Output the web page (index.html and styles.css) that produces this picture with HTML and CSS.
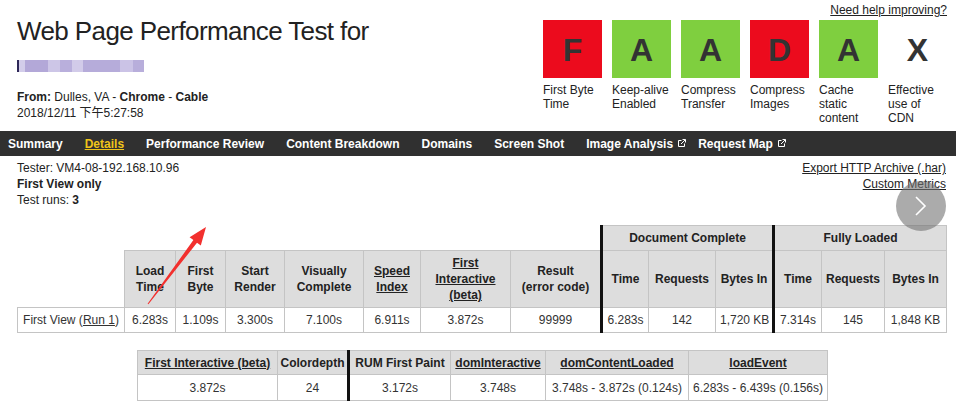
FILE: index.html
```html
<!DOCTYPE html>
<html lang="en">
<head>
<meta charset="utf-8">
<title>Web Page Performance Test</title>
<link rel="stylesheet" href="styles.css">
</head>
<body>
<div class="page">
  <header class="header">
    <div class="title-block">
      <h1 class="title">Web Page Performance Test for</h1>
      <div class="url-blur"><span class="s1"></span><span class="s2"></span><span class="s3"></span><span class="s4"></span><span class="s5"></span><span class="s6"></span><span class="s7"></span><span class="s8"></span></div>
      <div class="test-meta">
        <div><b>From:</b> Dulles, VA - <b>Chrome</b> - <b>Cable</b></div>
        <div>2018/12/11 下午5:27:58</div>
      </div>
    </div>
    <div class="grades-block">
      <a class="help-link" href="#">Need help improving?</a>
      <ul class="grades">
        <li class="grade"><div class="grade-box red">F</div><div class="grade-label">First Byte Time</div></li>
        <li class="grade"><div class="grade-box green">A</div><div class="grade-label">Keep-alive Enabled</div></li>
        <li class="grade"><div class="grade-box green">A</div><div class="grade-label">Compress Transfer</div></li>
        <li class="grade"><div class="grade-box red">D</div><div class="grade-label">Compress Images</div></li>
        <li class="grade"><div class="grade-box green">A</div><div class="grade-label">Cache static content</div></li>
        <li class="grade"><div class="grade-box">X</div><div class="grade-label">Effective use of CDN</div></li>
      </ul>
    </div>
  </header>

  <nav class="nav">
    <a href="#">Summary</a>
    <a href="#" class="active">Details</a>
    <a href="#">Performance Review</a>
    <a href="#">Content Breakdown</a>
    <a href="#">Domains</a>
    <a href="#">Screen Shot</a>
    <a href="#">Image Analysis<svg class="ext" width="8" height="8" viewBox="0 0 8 8"><path d="M3.5 1.5H0.5v6h6V4.5" fill="none" stroke="#fff" stroke-width="1"/><path d="M3 5L7.2 0.8M4.5 0.5h3v3" fill="none" stroke="#fff" stroke-width="1"/></svg></a>
    <a href="#">Request Map<svg class="ext" width="8" height="8" viewBox="0 0 8 8"><path d="M3.5 1.5H0.5v6h6V4.5" fill="none" stroke="#fff" stroke-width="1"/><path d="M3 5L7.2 0.8M4.5 0.5h3v3" fill="none" stroke="#fff" stroke-width="1"/></svg></a>
  </nav>

  <section class="run-info">
    <div class="run-meta">
      <div>Tester: VM4-08-192.168.10.96</div>
      <div><b>First View only</b></div>
      <div>Test runs: <b>3</b></div>
    </div>
    <div class="exports">
      <a href="#">Export HTTP Archive (.har)</a>
      <a href="#">Custom Metrics</a>
    </div>
  </section>

  <table class="results">
    <colgroup>
      <col class="w107"><col class="w51"><col class="w50"><col class="w59"><col class="w79"><col class="w57"><col class="w90"><col class="w91"><col class="w47"><col class="w67"><col class="w58"><col class="w48"><col class="w63"><col class="w62">
    </colgroup>
    <tr class="row-group">
      <td class="blank" colspan="8"></td>
      <th colspan="3" class="sep">Document Complete</th>
      <th colspan="3" class="sep">Fully Loaded</th>
    </tr>
    <tr class="row-head">
      <td class="blank"></td>
      <th>Load<br>Time</th>
      <th>First<br>Byte</th>
      <th>Start<br>Render</th>
      <th>Visually<br>Complete</th>
      <th><a href="#">Speed<br>Index</a></th>
      <th><a href="#">First<br>Interactive<br>(beta)</a></th>
      <th>Result<br>(error code)</th>
      <th class="sep">Time</th>
      <th>Requests</th>
      <th>Bytes In</th>
      <th class="sep">Time</th>
      <th>Requests</th>
      <th>Bytes In</th>
    </tr>
    <tr class="row-data">
      <td>First View (<a href="#">Run 1</a>)</td>
      <td>6.283s</td>
      <td>1.109s</td>
      <td>3.300s</td>
      <td>7.100s</td>
      <td>6.911s</td>
      <td>3.872s</td>
      <td>99999</td>
      <td class="sep">6.283s</td>
      <td>142</td>
      <td>1,720 KB</td>
      <td class="sep">7.314s</td>
      <td>145</td>
      <td>1,848 KB</td>
    </tr>
  </table>

  <table class="metrics">
    <colgroup>
      <col class="w140"><col class="w71"><col class="w102"><col class="w95"><col class="w143"><col class="w139">
    </colgroup>
    <tr class="m-head">
      <th><a href="#">First Interactive (beta)</a></th>
      <th>Colordepth</th>
      <th class="sep">RUM First Paint</th>
      <th><a href="#">domInteractive</a></th>
      <th><a href="#">domContentLoaded</a></th>
      <th><a href="#">loadEvent</a></th>
    </tr>
    <tr class="m-data">
      <td>3.872s</td>
      <td>24</td>
      <td class="sep">3.172s</td>
      <td>3.748s</td>
      <td>3.748s - 3.872s (0.124s)</td>
      <td>6.283s - 6.439s (0.156s)</td>
    </tr>
  </table>

  <svg class="arrow" width="75" height="90" viewBox="0 0 75 90"><polygon points="7.6,83.7 53.4,20.1 49.6,17.2 66,7 60.8,25.6 57,22.7 8.4,84.3" fill="#f2302e"/></svg>

  <div class="next-btn"><svg width="50" height="50" viewBox="0 0 50 50"><path d="M20 16L29 25L20 34" fill="none" stroke="#fff" stroke-width="1.6"/></svg></div>
</div>
</body>
</html>
```

FILE: styles.css
```css
* { box-sizing: border-box; }

body {
  margin: 0;
  font-family: "Liberation Sans", Arial, "Noto Sans CJK SC", sans-serif;
  font-size: 12px;
  color: #222;
  background: #fff;
}

a { color: inherit; text-decoration: underline; }

.page {
  position: relative;
  width: 956px;
  height: 402px;
  overflow: hidden;
}

/* Header */
.header {
  display: flex;
  justify-content: space-between;
  height: 131px;
  padding: 0 9px 0 17px;
}

.title {
  margin: 16px 0 0;
  font-size: 26px;
  line-height: 30px;
  font-weight: normal;
  letter-spacing: -0.6px;
  color: #222;
}

.url-blur {
  display: flex;
  height: 12px;
  margin-top: 14px;
}
.url-blur span { display: block; height: 100%; }
.url-blur .s1 { width: 8px; background: #d3cdea; border-left: 2px solid #2e2858; }
.url-blur .s2 { width: 23px; background: #b3a8d8; }
.url-blur .s3 { width: 12px; background: #cdc6e7; }
.url-blur .s4 { width: 12px; background: #b9afdc; }
.url-blur .s5 { width: 11px; background: #d2cbe9; }
.url-blur .s6 { width: 37px; background: #b6acda; }
.url-blur .s7 { width: 13px; background: #cbc3e6; }
.url-blur .s8 { width: 11px; background: #b8aedb; }

.test-meta {
  margin-top: 17px;
  line-height: 16px;
}

.grades-block {
  display: flex;
  flex-direction: column;
  align-items: flex-end;
}

.help-link {
  margin-top: 3px;
  line-height: 14px;
}

.grades {
  display: flex;
  gap: 10px;
  list-style: none;
  margin: 3px 0 0;
  padding: 0;
}

.grade { width: 59px; }

.grade-box {
  height: 58px;
  display: flex;
  align-items: center;
  justify-content: center;
  padding-top: 2px;
  font-weight: bold;
  font-size: 32px;
  color: #333;
}
.grade-box.red { background: #ec0b1d; }
.grade-box.green { background: #7fcf3f; }

.grade-label {
  margin-top: 5px;
  line-height: 14px;
  color: #222;
}

/* Nav */
.nav {
  display: flex;
  align-items: center;
  height: 25px;
  background: #303030;
  padding-left: 8px;
  gap: 22px;
}
.nav a {
  display: flex;
  align-items: center;
  color: #fff;
  font-weight: bold;
  text-decoration: none;
}
.nav a.active {
  color: #efc41a;
  text-decoration: underline;
}
.nav .ext {
  margin-left: 5px;
  margin-right: -10px;
  margin-top: -2px;
}

/* Run info */
.run-info {
  display: flex;
  justify-content: space-between;
  padding: 0 10px 0 17px;
  margin-top: 4px;
  line-height: 16px;
}
.exports {
  display: flex;
  flex-direction: column;
  align-items: flex-end;
}

/* Tables */
table {
  border-collapse: collapse;
  table-layout: fixed;
}
th, td {
  border: 1px solid #c4c4c4;
  text-align: center;
  vertical-align: middle;
  padding: 0 4px;
  line-height: 16px;
  white-space: nowrap;
}
th {
  background: #dddddd;
  font-weight: bold;
  color: #222;
}
td { color: #333; }
td.blank {
  border: none;
  background: transparent;
}
.sep { border-left: 3px solid #111; }

.results {
  width: 929px;
  margin: 17px 0 0 17px;
}
.row-group { height: 25px; }
.row-head { height: 57px; }
.row-data { height: 25px; }

.w107 { width: 107px; }
.w51 { width: 51px; }
.w50 { width: 50px; }
.w59 { width: 59px; }
.w79 { width: 79px; }
.w57 { width: 57px; }
.w90 { width: 90px; }
.w91 { width: 91px; }
.w47 { width: 47px; }
.w67 { width: 67px; }
.w58 { width: 58px; }
.w48 { width: 48px; }
.w63 { width: 63px; }
.w62 { width: 62px; }

.metrics {
  width: 690px;
  margin: 17px 0 0 137px;
}
.metrics th, .metrics td { padding: 0 2px; }
.m-head { height: 24px; }
.m-data { height: 26px; }

.w140 { width: 140px; }
.w71 { width: 71px; }
.w102 { width: 102px; }
.w95 { width: 95px; }
.w143 { width: 143px; }
.w139 { width: 139px; }

/* Overlays */
.arrow {
  position: absolute;
  left: 140px;
  top: 220px;
}

.next-btn {
  position: absolute;
  left: 896px;
  top: 181px;
  width: 50px;
  height: 50px;
  border-radius: 50%;
  background: rgba(115, 115, 115, 0.6);
}
.next-btn svg { display: block; }
```
